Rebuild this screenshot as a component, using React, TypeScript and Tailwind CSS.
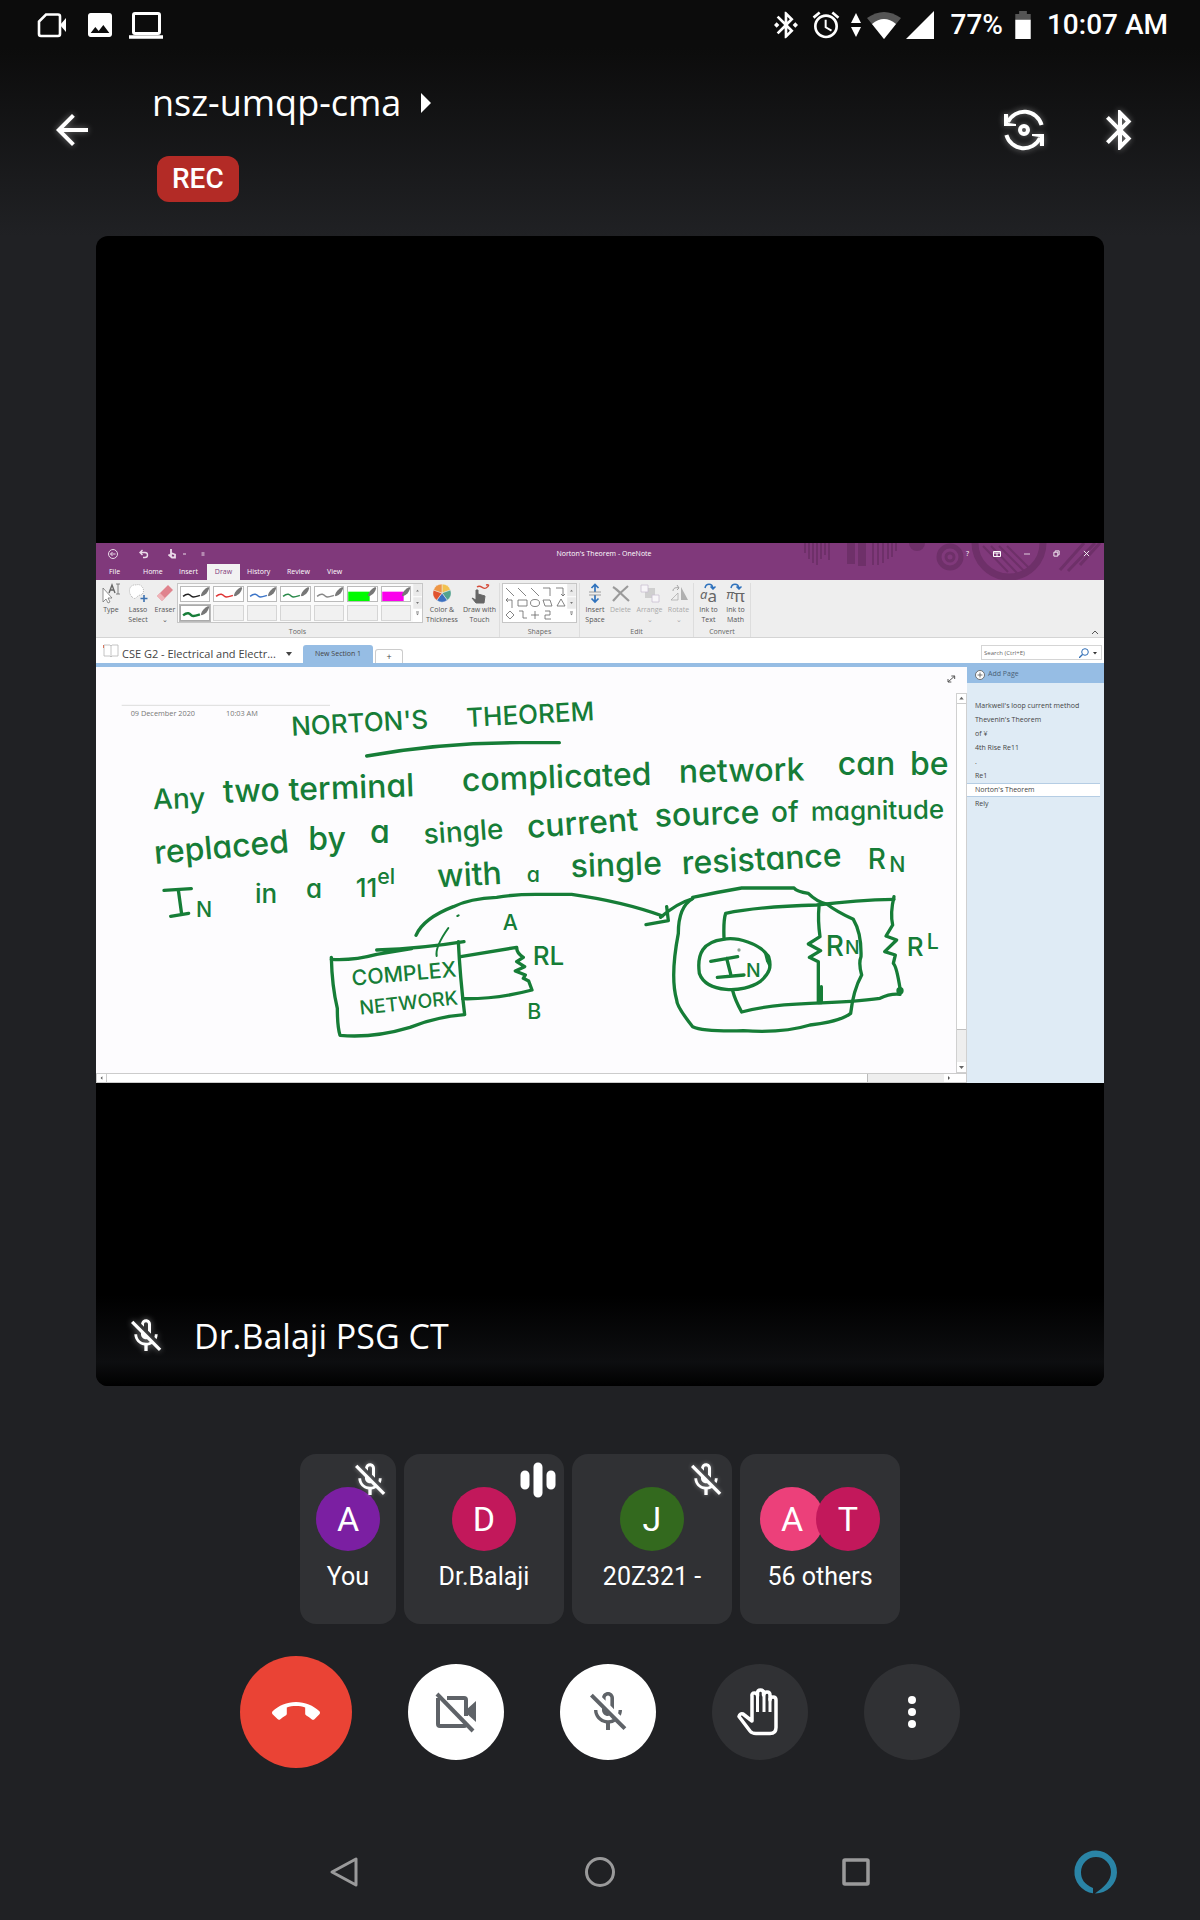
import React from "react";
import type { ReactNode } from "react";
import {
  MdAccessAlarm,
  MdArrowBack,
  MdBluetooth,
  MdBluetoothConnected,
  MdCallEnd,
  MdImage,
  MdOutlineMicOff,
} from "react-icons/md";

function StatusBar() {
  return (
    <div className="flex h-12 items-center justify-between pt-px pr-8 pl-9 text-[28px] leading-8 font-medium">
      <div className="flex items-center gap-4">
        <svg viewBox="0 0 32 32" className="h-8 w-8" fill="none" stroke="currentColor" strokeWidth="2.6">
          <path d="M10 5.5H22a2 2 0 0 1 2 2V25a2 2 0 0 1-2 2H5a2 2 0 0 1-2-2V12.500z" />
          <path d="M24 16l6-7v14z" fill="currentColor" stroke="none" />
        </svg>
        <MdImage className="h-9 w-8" />
        <svg viewBox="0 0 36 32" className="-ml-1 h-8 w-9" fill="none" stroke="currentColor">
          <rect x="5.500" y="4.500" width="26" height="20" rx="1.500" strokeWidth="3" />
          <path d="M1 28h34" strokeWidth="3.500" />
        </svg>
      </div>
      <div className="flex items-center">
        <MdBluetoothConnected className="h-8 w-8" />
        <MdAccessAlarm className="ml-2 h-8 w-8" />
        <svg viewBox="0 0 12 28" className="ml-2 h-7 w-3" fill="currentColor">
          <path d="M6 2l5 10H1zM6 26l5-10H1z" />
        </svg>
        <svg viewBox="0 0 36 28" className="ml-1 h-7 w-9">
          <path d="M1 7Q18-5 35 7L18 28z" fill="#555555" />
          <path d="M6 13Q18 3 30 13L18 28z" fill="currentColor" />
        </svg>
        <svg viewBox="0 0 26 26" className="ml-1 h-7 w-7" fill="currentColor">
          <path d="M26 0v26H0z" />
        </svg>
        <span className="ml-4">77%</span>
        <svg viewBox="0 0 16 29" className="ml-3 h-7 w-4">
          <path d="M4 0h8v3h4v6H0V3h4z" fill="#555555" />
          <path d="M0 9h16v20H0z" fill="currentColor" />
        </svg>
        <span className="ml-4">10:07 AM</span>
      </div>
    </div>
  );
}

function MeetingHeader() {
  return (
    <header className="flex h-[188px] items-start pt-8 pr-14 pl-12">
      <button aria-label="Back" className="mt-[26px] drop-shadow-[0_0_3px_rgba(255,255,255,0.4)]">
        <MdArrowBack className="h-12 w-12" />
      </button>
      <div className="ml-14 flex flex-1 flex-col items-start">
        <button className="flex items-center gap-5 font-['Open_Sans'] text-[36px] leading-[46px]">
          nsz-umqp-cma
          <svg viewBox="0 0 10 20" className="h-5 w-[10px]" fill="currentColor">
            <path d="M0 0l10 10L0 20z" />
          </svg>
        </button>
        <span className="mt-[30px] ml-[5px] rounded-xl bg-[#b32b26] px-[15px] text-[28px] leading-[46px] font-medium">
          REC
        </span>
      </div>
      <button aria-label="Switch camera" className="mt-[26px] drop-shadow-[0_0_3px_rgba(255,255,255,0.4)]">
        <svg viewBox="0 0 24 24" className="h-12 w-12" fill="none" stroke="currentColor" strokeWidth="2">
          <path d="M20.800 9.500A9 9 0 0 0 4 8" />
          <path d="M3.200 14.500A9 9 0 0 0 20 16" />
          <path d="M2 4v6h6V9L4.300 8.500 4 4zM22 20v-6h-6v1l3.700.5.300 4.500z" fill="currentColor" stroke="none" />
          <circle cx="12" cy="12" r="2" />
        </svg>
      </button>
      <button aria-label="Bluetooth audio" className="ml-12 drop-shadow-[0_0_3px_rgba(255,255,255,0.4)]">
        <MdBluetooth className="mt-[26px] h-12 w-12" />
      </button>
    </header>
  );
}

function TitleBar() {
  return (
    <div className="relative flex h-[21px] items-center text-[7px] leading-[10px] text-white">
      <svg viewBox="0 0 300 37" className="absolute top-0 right-0 h-[37px] w-[300px]" fill="none" stroke="#6e3069">
        <path d="M1 0v10M5 0v16M9 0v20M13 0v22M17 0v16M21 0v12M25 0v17" strokeWidth="2" />
        <path d="M47 0v21M58 0v23" strokeWidth="8" />
        <path d="M69 0v22M74 0v22M79 0v20M84 0v16M88 0v14M92 0v8" strokeWidth="2" />
        <circle cx="113" cy="0" r="8" fill="#6e3069" stroke="none" />
        <circle cx="146" cy="14" r="11" strokeWidth="5" />
        <circle cx="146" cy="14" r="4" strokeWidth="3" />
        <path d="M171 0a33 33 0 0 0 68 0" strokeWidth="7" />
        <path d="M179 3l25 26M187 3l26 27M195 3l25 25M203 3l22 22" strokeWidth="2" />
        <path d="M256 27l24-27M264 28l27-28M276 22l20-22" strokeWidth="3" />
      </svg>
      <svg viewBox="0 0 120 20" className="h-5 w-[146px] shrink-0" preserveAspectRatio="xMinYMid" fill="none" stroke="#eadbe9" strokeWidth="1">
        <circle cx="17" cy="10" r="4.500" />
        <path d="M19.500 10h-5m2-2-2 2 2 2" />
        <path d="M44 8.500h5a2 2 0 0 1 0 5h-2M46.500 6 44 8.500l2.500 2.500" strokeWidth="1.400" />
        <path d="M75 5v7M72.500 10.500l3.500 3h3v-3L75 9" strokeWidth="1.800" />
        <path d="M87 10h3M105.500 9h3M105.500 11h3" />
      </svg>
      <span className="flex-1 text-center">Norton's Theorem - OneNote</span>
      <div className="relative flex w-[138px] shrink-0 items-center gap-[23px]">
        <span className="w-1">?</span>
        <svg viewBox="0 0 8 8" className="h-2 w-2" fill="none" stroke="currentColor">
          <path d="M.5 1.500h7v5h-7zM.5 3h7M4 3v3" />
        </svg>
        <svg viewBox="0 0 8 8" className="h-2 w-[6px]" stroke="currentColor">
          <path d="M0 4h8" />
        </svg>
        <svg viewBox="0 0 8 8" className="h-[7px] w-[7px]" fill="none" stroke="currentColor">
          <path d="M1 2.500h4.500V7H1zM2.500 2V1H7v4.500H6" />
        </svg>
        <svg viewBox="0 0 8 8" className="h-[7px] w-[7px]" stroke="currentColor">
          <path d="M1 1l6 6M7 1L1 7" />
        </svg>
      </div>
    </div>
  );
}

function RibbonTabs() {
  return (
    <div className="relative flex h-4 items-center pl-[9px] text-[7px] leading-4 text-white">
      <button className="w-[34px] px-1 text-left">File</button>
      <button className="w-9 px-1 text-left">Home</button>
      <button className="w-8 px-1 text-left">Insert</button>
      <button className="h-4 w-[33px] bg-[#f2f2f2] text-center text-[#80397b]">Draw</button>
      <button className="ml-[3px] w-10 px-1 text-left">History</button>
      <button className="w-10 px-1 text-left">Review</button>
      <button className="px-1 text-left">View</button>
    </div>
  );
}

function Tool({ className, icon, children }: { className: string; icon: ReactNode; children: ReactNode }) {
  return (
    <button className={`flex shrink-0 flex-col items-center whitespace-nowrap ${className}`}>
      {icon}
      <span className="leading-[10px]">{children}</span>
    </button>
  );
}

function Pen({ color, marker, selected }: { color?: string; marker?: boolean; selected?: boolean }) {
  return (
    <button
      aria-label={color ? "Pen" : "Empty pen slot"}
      className={`h-4 border ${selected ? "border-[#aaaaaa] bg-white ring-1 ring-[#bbbbbb]" : color ? "border-[#bbbbbb] bg-white" : "border-[#d5d5d5] bg-[#f1f1f1]"}`}
    >
      {color && (
        <svg viewBox="0 0 30 15" className="h-full w-full" fill="none">
          {marker ? (
            <path d="M0 5h23v10H0z" fill={color} />
          ) : (
            <path d="M2 10c5-4 7-2 9 0s6 0 9-1" stroke={color} strokeWidth={selected ? 2.6 : 1.6} />
          )}
          <path d="M21 9c1-4 4-7 8-9l1 1c-1 4-3 7-8 9z" fill="#777777" />
        </svg>
      )}
    </button>
  );
}

const pens: { color?: string; marker?: boolean; selected?: boolean }[] = [
  { color: "#222222" },
  { color: "#df3434" },
  { color: "#3c75c8" },
  { color: "#2b8a4b" },
  { color: "#888888" },
  { color: "#00fb00", marker: true },
  { color: "#fb00ec", marker: true },
  { color: "#177d38", selected: true },
  {},
  {},
  {},
  {},
  {},
  {},
];

function Caption({ children }: { children: ReactNode }) {
  return <div className="text-center leading-[10px] text-[#666666]">{children}</div>;
}

function SpinColumn() {
  return (
    <svg viewBox="0 0 9 40" className="h-full w-[9px] bg-white" fill="#777777">
      <path d="M0 0h9v13H0zM0 14h9v12H0z" fill="#eaeaea" />
      <path d="M3 8h3L4.500 6zM3 19h3l-1.500 2zM3 31h3l-1.500 2zM3 29h3v1H3z" />
    </svg>
  );
}

function ConvertIcon({ glyph }: { glyph: string }) {
  return (
    <span className="relative flex h-[22px] items-end justify-center font-['Noto_Sans'] text-[17px] leading-[18px] text-[#666666]">
      <i className="text-[13px] leading-[22px]">{glyph}</i>
      {glyph}
      <svg viewBox="0 0 12 7" className="absolute top-0 left-1 h-[7px] w-3" fill="none" stroke="#2f72bd" strokeWidth="1.500">
        <path d="M1 5c1-5 7-5 8 0M6.500 3.500L9 6l2.500-2.500" />
      </svg>
    </span>
  );
}

function Ribbon() {
  return (
    <div className="flex h-[58px] overflow-hidden border-b border-[#d4d4d4] bg-[#eeeeee] pt-[3px] text-[7px] text-[#555555]">
      <div className="flex w-[404px] shrink-0 flex-col border-r border-[#dddddd]">
        <div className="flex h-[45px] items-start">
          <Tool
            className="ml-1 w-[22px]"
            icon={
              <svg viewBox="0 0 20 22" className="h-[22px] w-5" fill="none" stroke="#666666">
                <path d="M2 5v14l3-3 2 4 2-1-2-4h4z" fill="#ffffff" strokeWidth=".7" />
                <path d="M8 10l3-8 3 8M9 7h4" strokeWidth="1.400" />
                <path d="M15 1h4M17 1v10M15 11h4" strokeWidth=".8" />
              </svg>
            }
          >
            Type
          </Tool>
          <Tool
            className="ml-1 w-6"
            icon={
              <svg viewBox="0 0 20 22" className="h-[22px] w-5" fill="none">
                <path d="M4 14C-1 8 2 1 8 2c5-2 9 4 7 8-1 3-4 1-6 4-2 2-3 2-5 0z" fill="#ffffff" stroke="#999999" strokeWidth=".7" strokeDasharray="1 1" />
                <path d="M16 12v7M12.500 15.500h7" stroke="#3b70b0" strokeWidth="1.600" />
              </svg>
            }
          >
            Lasso
            <br />
            Select
          </Tool>
          <Tool
            className="ml-[3px] w-6"
            icon={
              <svg viewBox="0 0 20 22" className="h-[22px] w-5">
                <path d="M2 13L13 2l5 5L7 18z" fill="#e0838d" />
                <path d="M2 13l3-3 5 5-3 3z" fill="#efb3b8" />
              </svg>
            }
          >
            Eraser
            <br />⌄
          </Tool>
          <div className="flex h-10 w-[246px] border border-[#c6c6c6] bg-[#fafafa]">
            <div className="grid flex-1 grid-cols-7 gap-[3px] p-[2px]">
              {pens.map((pen, i) => (
                <Pen key={i} {...pen} />
              ))}
            </div>
            <SpinColumn />
          </div>
          <Tool
            className="ml-[2px] w-[34px]"
            icon={
              <svg viewBox="-9 -10 18 22" className="h-[22px] w-[18px]" stroke="#eeeeee" strokeWidth=".5">
                <path d="M0 0V-9A9 9 0 0 1 8.500-3z" fill="#f2c14f" />
                <path d="M0 0L8.500-3A9 9 0 0 1 5.300 7.300z" fill="#52a38e" />
                <path d="M0 0L5.300 7.300A9 9 0 0 1-5.300 7.300z" fill="#3b70c0" />
                <path d="M0 0L-5.300 7.300A9 9 0 0 1-8.500-3z" fill="#e0532f" />
                <path d="M0 0L-8.500-3A9 9 0 0 1 0-9z" fill="#ee9646" />
              </svg>
            }
          >
            Color &amp;
            <br />
            Thickness
          </Tool>
          <Tool
            className="ml-[2px] w-[37px]"
            icon={
              <svg viewBox="0 0 20 22" className="h-[22px] w-5" fill="none">
                <path d="M6 7v10l-4-2 4 5h8l1-7-7-2V7z" fill="#666666" stroke="#666666" />
                <path d="M7 4c4-3 6 3 9 1s4-4 0-3" stroke="#d54a38" strokeWidth="1.300" />
              </svg>
            }
          >
            Draw with
            <br />
            Touch
          </Tool>
        </div>
        <Caption>Tools</Caption>
      </div>
      <div className="flex w-20 shrink-0 flex-col border-r border-[#dddddd]">
        <div className="h-[45px] px-[2px]">
          <div className="flex h-10 border border-[#c6c6c6] bg-white">
            <svg viewBox="0 0 64 38" className="h-full flex-1" fill="none" stroke="#666666" strokeWidth=".8">
              <path d="M3 4l8 8M15 4l8 8M28 4l8 8M40 4h7v8M53 4h7v8m-2-2 2 2 2-2M3 16h6v8M3 16l2-2m-2 2 2 2" />
              <path d="M15 16h9v6h-9zM40 16h7l2 6h-7zM54 22l4-7 4 7zM7 27l4 4-4 4-4-4zM16 27h4v7h4M28 31h8M32 27v8M42 27h5v4h-5v4h6" />
              <ellipse cx="32" cy="19" rx="4.500" ry="3.500" />
            </svg>
            <SpinColumn />
          </div>
        </div>
        <Caption>Shapes</Caption>
      </div>
      <div className="flex w-[114px] shrink-0 flex-col border-r border-[#dddddd]">
        <div className="flex h-[45px] pl-1">
          <Tool
            className="w-[22px]"
            icon={
              <svg viewBox="0 0 14 22" className="h-[22px] w-[14px]" fill="none" stroke="#2f72bd" strokeWidth="1.700">
                <path d="M7 2v7M3.500 5 7 1.500 10.500 5M7 12v7M3.500 15.500 7 19l3.500-3.500" />
                <path d="M1 9h12M1 12h12" stroke="#888888" strokeWidth=".8" />
              </svg>
            }
          >
            Insert
            <br />
            Space
          </Tool>
          <Tool
            className="ml-[2px] w-[25px] text-[#a9a9a9]"
            icon={
              <svg viewBox="0 0 20 22" className="h-[22px] w-5" fill="none" stroke="#9a9a9a" strokeWidth="2.200">
                <path d="M2 4c5 3 9 8 16 14M17 3C11 8 7 12 2 18" />
              </svg>
            }
          >
            Delete
          </Tool>
          <Tool
            className="ml-[2px] w-[29px] text-[#a9a9a9]"
            icon={
              <svg viewBox="0 0 20 22" className="h-[22px] w-5" stroke="#c9bfd0" strokeWidth=".8">
                <path d="M5 5h10v10H5z" fill="#cfcfcf" stroke="none" />
                <path d="M1 2h7v7H1zM12 12h7v7h-7z" fill="#f7f5f8" />
              </svg>
            }
          >
            Arrange
            <br />⌄
          </Tool>
          <Tool
            className="ml-[2px] w-[25px] text-[#a9a9a9]"
            icon={
              <svg viewBox="0 0 20 22" className="h-[22px] w-5" fill="none" stroke="#a5a5a5">
                <path d="M2 17l7-7v7z" strokeWidth=".7" />
                <path d="M12 17V4l7 13z" fill="#b0b0b0" stroke="none" />
                <path d="M4 8c0-3 3-4 6-3M8 2l2 3-2 2" />
              </svg>
            }
          >
            Rotate
            <br />⌄
          </Tool>
        </div>
        <Caption>Edit</Caption>
      </div>
      <div className="flex w-[57px] shrink-0 flex-col border-r border-[#dddddd]">
        <div className="flex h-[45px] justify-center gap-[3px]">
          <Tool className="w-6" icon={<ConvertIcon glyph="a" />}>
            Ink to
            <br />
            Text
          </Tool>
          <Tool className="w-6" icon={<ConvertIcon glyph="π" />}>
            Ink to
            <br />
            Math
          </Tool>
        </div>
        <Caption>Convert</Caption>
      </div>
      <div className="flex flex-1 items-end justify-end pr-[6px] pb-[3px]">
        <svg viewBox="0 0 6 4" className="h-1 w-[6px]" fill="none" stroke="#555555">
          <path d="M0 4l3-3 3 3" />
        </svg>
      </div>
    </div>
  );
}

function NotebookBar() {
  return (
    <div className="flex h-[25px] items-end bg-white pl-[7px] text-[#444444]">
      <svg viewBox="0 0 16 14" className="mb-[5px] h-[14px] w-4 shrink-0" fill="#ffffff" stroke="#b5b5b5" strokeWidth=".8">
        <path d="M1 1h6l1 1 1-1h6v11H9l-1 1-1-1H1zM8 2v11" />
        <path d="M.5 1v3" stroke="#d65a3b" />
      </svg>
      <button className="ml-[3px] flex h-[25px] w-[170px] items-center justify-between pt-[7px] text-[11px] whitespace-nowrap">
        CSE G2 - Electrical and Electr...
        <svg viewBox="0 0 6 4" className="h-1 w-[6px]" fill="currentColor">
          <path d="M0 0h6L3 4z" />
        </svg>
      </button>
      <button className="ml-[11px] h-[18px] w-[70px] rounded-t-[3px] bg-[#96bde4] text-[7px] leading-[18px]">New Section 1</button>
      <button aria-label="Add section" className="ml-[2px] h-[14px] w-7 rounded-t-[3px] border border-b-0 border-[#cccccc] text-[9px] leading-[13px]">
        +
      </button>
      <div className="mr-[2px] mb-[3px] ml-auto flex h-[15px] w-[121px] items-center border border-[#d5d5d5] pr-1 pl-[2px]">
        <input aria-label="Search" placeholder="Search (Ctrl+E)" className="min-w-0 flex-1 text-[6px] leading-[10px] outline-none placeholder:text-[#666666]" />
        <svg viewBox="0 0 18 10" className="h-[10px] w-[18px]" fill="none" stroke="#2f6db5">
          <circle cx="6" cy="4" r="3.300" />
          <path d="M3.500 6.500L0 10" strokeWidth="1.300" />
          <path d="M14 4h4l-2 2.500z" fill="#333333" stroke="none" />
        </svg>
      </div>
    </div>
  );
}

type Word = { t: string; x: number; y: number; s: number; r?: number };

const words: Word[] = [
  { t: "NORTON'S", x: 605, y: 167, s: 78, r: -3 },
  { t: "THEOREM", x: 1130, y: 141, s: 78, r: -3 },
  { t: "Any", x: 190, y: 388, s: 84, r: -2 },
  { t: "two", x: 400, y: 368, s: 96, r: -2 },
  { t: "terminal", x: 597, y: 362, s: 96, r: -2 },
  { t: "complicated", x: 1117, y: 334, s: 96, r: -2 },
  { t: "network", x: 1767, y: 308, s: 96, r: -1 },
  { t: "can", x: 2243, y: 285, s: 96 },
  { t: "be", x: 2460, y: 285, s: 96 },
  { t: "replaced", x: 195, y: 552, s: 96, r: -5 },
  { t: "by", x: 655, y: 510, s: 96 },
  { t: "a", x: 840, y: 490, s: 96 },
  { t: "single", x: 1003, y: 492, s: 84, r: -4 },
  { t: "current", x: 1313, y: 474, s: 96, r: -4 },
  { t: "source", x: 1695, y: 440, s: 96, r: -2 },
  { t: "of", x: 2043, y: 427, s: 84 },
  { t: "magnitude", x: 2163, y: 422, s: 78, r: -1 },
  { t: "N", x: 318, y: 710, s: 64 },
  { t: "in", x: 495, y: 670, s: 78 },
  { t: "a", x: 648, y: 655, s: 78 },
  { t: "11", x: 797, y: 650, s: 78 },
  { t: "el", x: 862, y: 611, s: 64 },
  { t: "with", x: 1043, y: 622, s: 96, r: -3 },
  { t: "a", x: 1310, y: 605, s: 64 },
  { t: "single", x: 1443, y: 592, s: 96, r: -2 },
  { t: "resistance", x: 1777, y: 583, s: 96, r: -3 },
  { t: "R", x: 2333, y: 568, s: 84 },
  { t: "N", x: 2398, y: 577, s: 64 },
  { t: "A", x: 1238, y: 750, s: 64 },
  { t: "COMPLEX", x: 787, y: 917, s: 64, r: -5 },
  { t: "NETWORK", x: 811, y: 1004, s: 58, r: -6 },
  { t: "RL", x: 1328, y: 855, s: 78 },
  { t: "B", x: 1312, y: 1018, s: 64 },
  { t: "N", x: 1968, y: 892, s: 58 },
  { t: "R", x: 2207, y: 828, s: 84 },
  { t: "N", x: 2265, y: 822, s: 58 },
  { t: "R", x: 2450, y: 828, s: 78 },
  { t: "L", x: 2510, y: 808, s: 64 },
];

function InkCanvas() {
  return (
    <svg viewBox="18 -39 2580 1218" className="block min-w-0 flex-1">
      <path d="M95 76H720" stroke="#dddddd" strokeWidth="3" />
      <g fill="#167d37" className="font-['Inter'] font-medium [font-feature-settings:'cv11']">
        {words.map((w, i) => (
          <text key={i} x={w.x} y={w.y} fontSize={w.s} transform={`rotate(${w.r ?? 0} ${w.x} ${w.y})`}>
            {w.t}
          </text>
        ))}
      </g>
      <g fill="#777777" fontSize="22" className="font-['Open_Sans']">
        <text x="122" y="108">09 December 2020</text>
        <text x="408" y="108">10:03 AM</text>
      </g>
      <g fill="none" stroke="#167d37" strokeWidth="10" strokeLinecap="round" strokeLinejoin="round">
        <path d="M830 228Q1050 188 1290 188H1408" />
        {/* current symbol before the subscript, with wide serifs */}
        <path d="M222 631L304 626M265 630L275 703M242 709L296 700" />
        <path d="M978 766Q1000 715 1090 680Q1140 655 1220 652Q1280 642 1350 643H1445Q1600 665 1718 708M1668 734L1735 722 1730 680M1712 712Q1760 670 1805 657" />
        <path d="M1075 744Q1035 800 1040 828M1102 708l4-2" strokeWidth="6" />
        <path d="M724 832Q726 920 742 985Q742 1040 750 1066Q850 1075 960 1042Q1040 1010 1124 1004Q1110 890 1105 785" />
        <path d="M724 838Q790 842 860 823L965 806M860 810Q1000 805 1122 785" />
        <path d="M1112 830L1280 802Q1280 820 1300 832L1280 845 1304 860 1276 873 1306 885 1300 895 1316 903 1326 930Q1220 958 1118 956" />
        <path d="M1808 652Q1880 637 1955 624H2112Q2120 635 2155 640Q2180 665 2210 672Q2240 695 2290 718Q2315 760 2313 830Q2305 850 2315 885Q2290 930 2282 1000Q2250 1025 2160 1035Q2080 1060 1960 1052Q1840 1055 1808 1040Q1760 980 1760 960Q1740 890 1765 760Q1765 680 1808 656" />
        <path d="M1902 774Q1900 720 1907 700Q2000 680 2180 675Q2300 660 2412 658" />
        <path d="M1928 932Q1935 960 1955 996Q2030 975 2160 970Q2300 965 2370 955Q2400 940 2430 943" />
        <path d="M1900 778C1840 785 1820 820 1828 880C1850 940 1960 940 2010 905C2040 880 2045 860 2036 830C2010 790 1940 770 1900 778Z" />
        <path d="M2187 680Q2183 720 2190 770L2155 792 2192 812 2158 832 2185 845V968H2194V920" />
        <path d="M2412 650Q2400 700 2408 735L2388 768 2420 780 2384 815 2416 825 2410 850Q2420 860 2430 925" />
        <path d="M1862 844L1943 830M1910 835L1922 882M1882 892L1962 885" />
      </g>
      <circle cx="2430" cy="932" r="11" fill="#167d37" />
      <path d="M2020 812l18 12v40l-10-20z" fill="#167d37" />
      <circle cx="1947" cy="810" r="5" fill="#8aa391" />
      <path d="M2574 6L2594 -12M2584 -12h10v9M2574 -3v9h10" fill="none" stroke="#555555" strokeWidth="3" />
    </svg>
  );
}

const pages = ["Markwell's loop current method", "Thevenin's Theorem", "of ¥", "4th Rise Re11", ".", "Re1", "Norton's Theorem", "Rely"];

function SharedNotebook() {
  return (
    <section aria-label="Shared screen" className="bg-[#fdfcfe] font-['Open_Sans']">
      <div className="relative bg-[#80397b]">
        <TitleBar />
        <RibbonTabs />
      </div>
      <Ribbon />
      <NotebookBar />
      <div className="flex border-t-4 border-[#96bde4]">
        <div className="min-w-0 flex-1">
          <div className="flex">
            <InkCanvas />
            <div className="flex w-[11px] shrink-0 flex-col pt-[26px]">
              <div className="flex flex-1 flex-col border border-[#d0d0d0] bg-[#eeeeee]">
                <svg viewBox="0 0 9 10" className="h-[10px] w-[9px] border-b border-[#cccccc] bg-white">
                  <path d="M2 6h5L4.500 3z" fill="#666666" />
                </svg>
                <div className="flex-1 border-b border-[#c0c0c0] bg-white" />
                <div className="h-8" />
                <svg viewBox="0 0 9 10" className="h-[10px] w-[9px] bg-white">
                  <path d="M2 4h5L4.500 7z" fill="#666666" />
                </svg>
              </div>
            </div>
          </div>
          <div className="flex h-[10px] border border-[#cccccc] bg-white">
            <svg viewBox="0 0 10 8" className="h-2 w-[10px] border-r border-[#cccccc]">
              <path d="M6 2v4L4 4z" fill="#555555" />
            </svg>
            <div className="flex-1 border-r border-[#bbbbbb]" />
            <div className="w-[76px] bg-[#eeeeee]" />
            <svg viewBox="0 0 22 8" className="h-2 w-[22px]">
              <path d="M4 2v4l2-2z" fill="#555555" />
            </svg>
          </div>
        </div>
        <aside className="w-[137px] shrink-0 bg-[#dfebf5] text-[7px] text-[#444444]">
          <button className="flex h-4 w-full items-center gap-[3px] bg-[#96bde4] pb-px pl-2 text-[#4a6076]">
            <svg viewBox="0 0 10 10" className="h-[10px] w-[10px]" stroke="#555555" strokeWidth=".8">
              <circle cx="5" cy="5" r="4.500" fill="#ffffff" />
              <path d="M5 2.500v5M2.500 5h5" />
            </svg>
            Add Page
          </button>
          <ul className="pt-4 pr-1 leading-[14px]">
            {pages.map((p) => (
              <li key={p} className={p === "Norton's Theorem" ? "border-y border-[#b5cde4] bg-white leading-3" : ""}>
                <button className="w-full pl-2 text-left whitespace-nowrap">{p}</button>
              </li>
            ))}
          </ul>
        </aside>
      </div>
    </section>
  );
}

function Avatar({ letter, className }: { letter: string; className: string }) {
  return (
    <span className={`flex h-16 w-16 shrink-0 items-center justify-center rounded-full text-[34px] leading-none ${className}`}>
      {letter}
    </span>
  );
}

function Tile({ name, width, badge, children }: { name: string; width: string; badge?: ReactNode; children: ReactNode }) {
  return (
    <button className={`relative flex h-[170px] flex-col items-center rounded-2xl bg-[#303134] pt-[33px] ${width}`}>
      <span className="flex">{children}</span>
      <span className="mt-2 text-[25px] leading-9">{name}</span>
      {badge}
    </button>
  );
}

const mutedBadge = (
  <MdOutlineMicOff aria-label="Muted" className="absolute top-[6px] right-[6px] h-10 w-10 drop-shadow-[0_0_2px_rgba(255,255,255,0.4)]" />
);

const speakingBadge = (
  <svg viewBox="0 0 36 36" className="absolute top-2 right-2 h-9 w-9" fill="none" stroke="currentColor" strokeWidth="9" strokeLinecap="round">
    <path d="M5 13v10M18 5v26M31 13v10" />
  </svg>
);

function Participants() {
  return (
    <div className="mt-[68px] flex justify-center gap-2">
      <Tile name="You" width="w-24" badge={mutedBadge}>
        <Avatar letter="A" className="bg-[#7b1fa2]" />
      </Tile>
      <Tile name="Dr.Balaji" width="w-40" badge={speakingBadge}>
        <Avatar letter="D" className="bg-[#c2185b]" />
      </Tile>
      <Tile name="20Z321 -" width="w-40" badge={mutedBadge}>
        <Avatar letter="J" className="bg-[#33691e]" />
      </Tile>
      <Tile name="56 others" width="w-40">
        <Avatar letter="A" className="bg-[#ec407a]" />
        <Avatar letter="T" className="-ml-2 bg-[#c2185b]" />
      </Tile>
    </div>
  );
}

function CallControls() {
  return (
    <div className="mt-8 flex items-center justify-center gap-14">
      <button aria-label="Leave call" className="flex h-28 w-28 items-center justify-center rounded-full bg-[#ea4335]">
        <MdCallEnd className="h-12 w-12" />
      </button>
      <button aria-label="Turn camera on" className="flex h-24 w-24 items-center justify-center rounded-full bg-white text-[#5f6368]">
        <svg viewBox="0 0 48 48" className="h-12 w-12" fill="none" stroke="currentColor" strokeWidth="4">
          <path d="M6 10v26q0 2 2 2h24q2 0 2-2" />
          <path d="M15 10h17q2 0 2 2v16" />
          <path d="M5 6l36 37" />
          <path d="M34 22l10-9v21l-10-9z" fill="currentColor" stroke="none" />
        </svg>
      </button>
      <button aria-label="Turn microphone on" className="flex h-24 w-24 items-center justify-center rounded-full bg-white text-[#5f6368]">
        <MdOutlineMicOff className="h-12 w-12" />
      </button>
      <button aria-label="Raise hand" className="flex h-24 w-24 items-center justify-center rounded-full bg-[#303134]">
        <svg viewBox="0 0 48 48" className="h-12 w-12" fill="none" stroke="currentColor" strokeWidth="3.500" strokeLinejoin="round">
          <path d="M16 33L7 26q-3-1-4 2.500L14 43q2 2.500 6 2.500h14q6 0 6-6V12q0-3-3-3t-3 3V7q0-3-3-3t-3.500 3V5q0-3-3-3t-3 3v3q0-3-3-3t-2.500 3z" />
          <path d="M21.500 7v17M28 6v18M34 10v14" strokeWidth="3" />
        </svg>
      </button>
      <button aria-label="More options" className="flex h-24 w-24 items-center justify-center rounded-full bg-[#303134]">
        <svg viewBox="0 0 48 48" className="h-12 w-12" fill="currentColor">
          <circle cx="24" cy="12" r="4" />
          <circle cx="24" cy="24" r="4" />
          <circle cx="24" cy="36" r="4" />
        </svg>
      </button>
    </div>
  );
}

function NavigationBar() {
  return (
    <nav className="mt-20 grid grid-cols-[1fr_256px_256px_256px_1fr] items-center justify-items-center pb-5 text-[#9a9a9b]">
      <button aria-label="Back" className="col-start-2">
        <svg viewBox="0 0 32 32" className="h-8 w-8" fill="none" stroke="currentColor" strokeWidth="3" strokeLinejoin="round">
          <path d="M28 3v26L4 16z" />
        </svg>
      </button>
      <button aria-label="Home">
        <svg viewBox="0 0 32 32" className="h-8 w-8" fill="none" stroke="currentColor" strokeWidth="3">
          <circle cx="16" cy="16" r="13.500" />
        </svg>
      </button>
      <button aria-label="Recent apps">
        <svg viewBox="0 0 32 32" className="h-8 w-8" fill="none" stroke="currentColor" strokeWidth="3.500">
          <rect x="4" y="4" width="24" height="24" rx="1" />
        </svg>
      </button>
      <button aria-label="Assistant" className="mr-20 justify-self-end">
        <svg viewBox="0 0 48 48" className="h-12 w-12" fill="#2a84a6">
          <path fillRule="evenodd" d="M24 2.500A21.500 21.500 0 0 0 21 45.300V40C12 36 9 31 9 24a15 15 0 0 1 30 0c0 9-7 15-16 21.500A21.500 21.500 0 0 0 24 2.500z" />
        </svg>
      </button>
    </nav>
  );
}

export default function App() {
  return (
    <div className="min-h-screen bg-[#202124] font-['Roboto'] text-white">
      <div className="bg-[linear-gradient(#0c0c0c_0,#0c0c0c_48px,#202124_236px)]">
        <StatusBar />
        <MeetingHeader />
      </div>
      <main className="mx-24 overflow-hidden rounded-xl bg-black pt-[307px]">
        <SharedNotebook />
        <div className="flex h-[303px] items-end bg-[linear-gradient(#000_70%,#0d0e10_92%,#000)] pb-[26px] pl-[30px]">
          <MdOutlineMicOff aria-label="Muted" className="mb-1 h-10 w-10 drop-shadow-[0_0_3px_rgba(255,255,255,0.5)]" />
          <span className="ml-7 font-['Open_Sans'] text-[34px] leading-[48px]">Dr.Balaji PSG CT</span>
        </div>
      </main>
      <Participants />
      <CallControls />
      <NavigationBar />
    </div>
  );
}
